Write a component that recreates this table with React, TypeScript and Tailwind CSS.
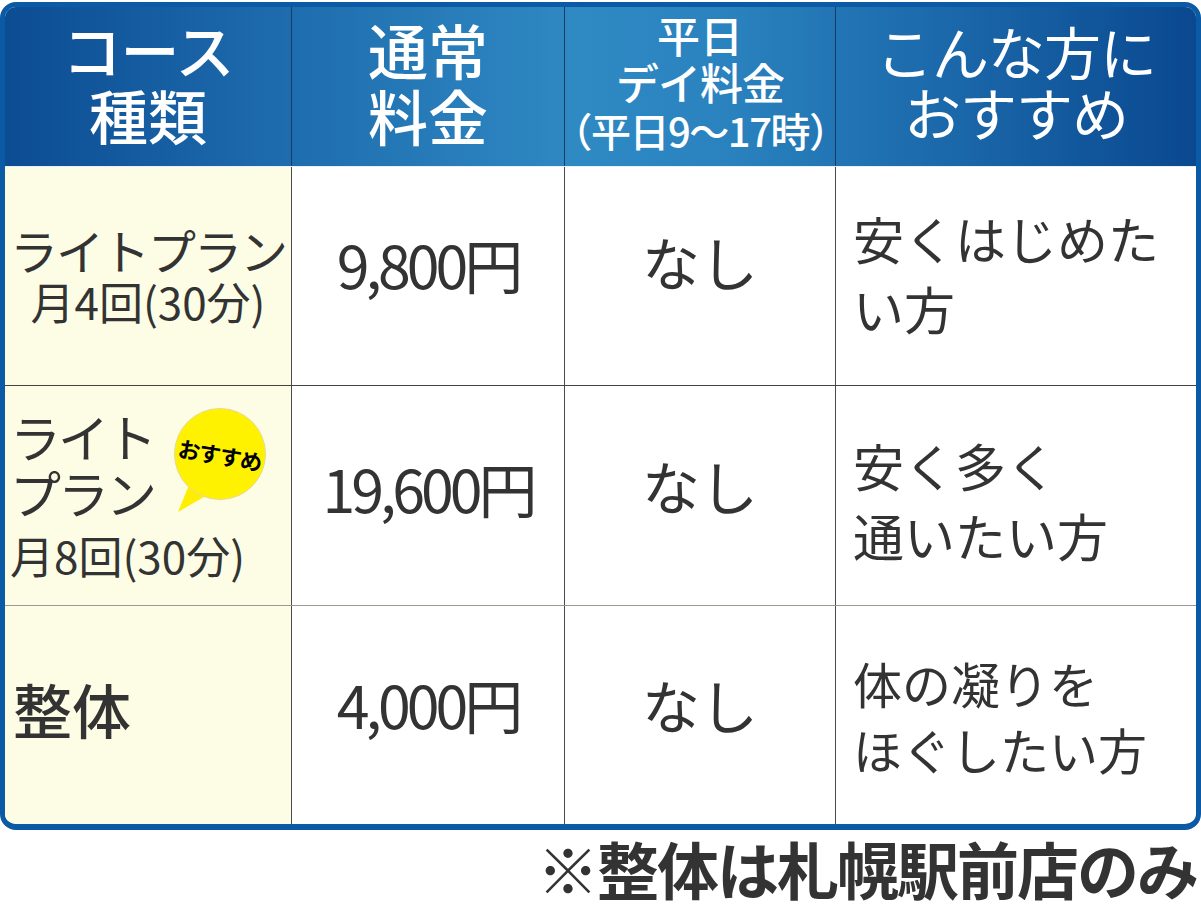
import React from "react";

const font = { fontFamily: '"Noto Sans CJK JP", "Noto Sans", sans-serif' };

function Badge() {
  return (
    <div className="absolute left-[158px] top-[16px] w-[110px] h-[110px]">
      <svg width="110" height="110" viewBox="0 0 110 110" className="absolute inset-0">
        <path d="M28 78 L15 110 L46 92 Z" fill="#ffee00" />
        <circle cx="57" cy="52" r="45.5" fill="#fff200" stroke="#e8d89a" strokeWidth="1" />
      </svg>
      <div className="absolute inset-0 flex items-center justify-center pl-[4px] pb-[6px]">
        <span className="text-[22px] font-bold text-black leading-none rotate-[10deg] tracking-[-1px]">おすすめ</span>
      </div>
    </div>
  );
}

export default function App() {
  const cell = "border-r border-[#4a4a4a]";
  return (
    <div className="w-[1201px] h-[913px] bg-white text-[#333333]" style={font}>
      <div className="pt-[2px]">
        <div className="w-[1201px] h-[828px] rounded-[16px] border-[5px] border-b-[6px] border-[#0b5aa5] overflow-hidden flex flex-col bg-white">
          {/* header */}
          <div className="h-[160px] grid grid-cols-[287px_273px_271px_1fr] text-white bg-[linear-gradient(90deg,#0c4c93_0%,#1f6eaf_25%,#2f89c3_48%,#2a83bf_60%,#1a67a9_80%,#0a4890_100%)] border-b border-[#e6f0f8]">
            <div className={`${cell} border-[#173b66] flex items-center justify-center pb-[10px]`}>
              <p className="text-[59px] leading-[66px] text-center font-medium">
                <span className="tracking-[-1px]">コース</span>
                <br />
                種類
              </p>
            </div>
            <div className={`${cell} border-[#173b66] flex items-center justify-center pb-[10px]`}>
              <p className="text-[60px] leading-[66px] text-center font-medium">
                通常
                <br />
                料金
              </p>
            </div>
            <div className={`${cell} border-[#173b66] flex items-center justify-center pb-[8px]`}>
              <p className="text-[43px] leading-[47px] text-center font-medium whitespace-nowrap">
                平日
                <br />
                <span className="tracking-[-1px]">デイ料金</span>
                <br />
                <span className="text-[40px] tracking-[-1.5px]">（平日9〜17時）</span>
              </p>
            </div>
            <div className="flex items-center justify-center pb-[12px]">
              <p className="text-[57px] leading-[61px] text-center tracking-[-1px]">
                こんな方に
                <br />
                おすすめ
              </p>
            </div>
          </div>
          {/* row 1 */}
          <div className="h-[219px] grid grid-cols-[287px_273px_271px_1fr] border-b border-[#444]">
            <div className={`${cell} bg-[#fdfde6] flex items-center justify-center pb-[8px]`}>
              <p className="text-center whitespace-nowrap">
                <span className="text-[48px] leading-[58px] tracking-[-2px]">ライトプラン</span>
                <br />
                <span className="text-[44px] leading-[46px] tracking-[0px]">月4回(30分)</span>
              </p>
            </div>
            <div className={`${cell} flex items-center justify-center pb-[24px]`}>
              <span className="text-[59px] tracking-[-4px]">9,800円</span>
            </div>
            <div className={`${cell} flex items-center justify-center pb-[30px]`}>
              <span className="text-[58px]">なし</span>
            </div>
            <div className="pl-[17px] pt-[36px]">
              <p className="text-[51px] leading-[70px]">
                安くはじめた
                <br />
                い方
              </p>
            </div>
          </div>
          {/* row 2 */}
          <div className="h-[220px] grid grid-cols-[287px_273px_271px_1fr] border-b border-[#9a9a90]">
            <div className={`${cell} relative bg-[#fdfde6] pl-[5px] pt-[22px]`}>
              <p className="text-[51px] leading-[56px] tracking-[-3px] whitespace-nowrap">
                ライト
                <br />
                プラン
              </p>
              <p className="text-[44px] leading-[50px] tracking-[0px] mt-[10px] whitespace-nowrap">月8回(30分)</p>
              <Badge />
            </div>
            <div className={`${cell} flex items-center justify-center pb-[14px]`}>
              <span className="text-[59px] tracking-[-4px]">19,600円</span>
            </div>
            <div className={`${cell} flex items-center justify-center pb-[20px]`}>
              <span className="text-[58px]">なし</span>
            </div>
            <div className="pl-[17px] pt-[44px]">
              <p className="text-[51px] leading-[70px]">
                安く多く
                <br />
                通いたい方
              </p>
            </div>
          </div>
          {/* row 3 */}
          <div className="flex-1 grid grid-cols-[287px_273px_271px_1fr]">
            <div className={`${cell} bg-[#fdfde6] pl-[8px] pt-[68px]`}>
              <span className="text-[59px] leading-[70px] font-medium">整体</span>
            </div>
            <div className={`${cell} flex items-center justify-center pb-[22px]`}>
              <span className="text-[59px] tracking-[-4px]">4,000円</span>
            </div>
            <div className={`${cell} flex items-center justify-center pb-[22px]`}>
              <span className="text-[58px]">なし</span>
            </div>
            <div className="pl-[17px] pt-[44px]">
              <p className="text-[49px] leading-[66px]">
                体の凝りを
                <br />
                ほぐしたい方
              </p>
            </div>
          </div>
        </div>
        <div className="flex justify-end pr-[4px] pt-[2px]">
          <span className="text-[62px] leading-[72px] font-bold tracking-[-2px] text-[#333]">※整体は札幌駅前店のみ</span>
        </div>
      </div>
    </div>
  );
}
